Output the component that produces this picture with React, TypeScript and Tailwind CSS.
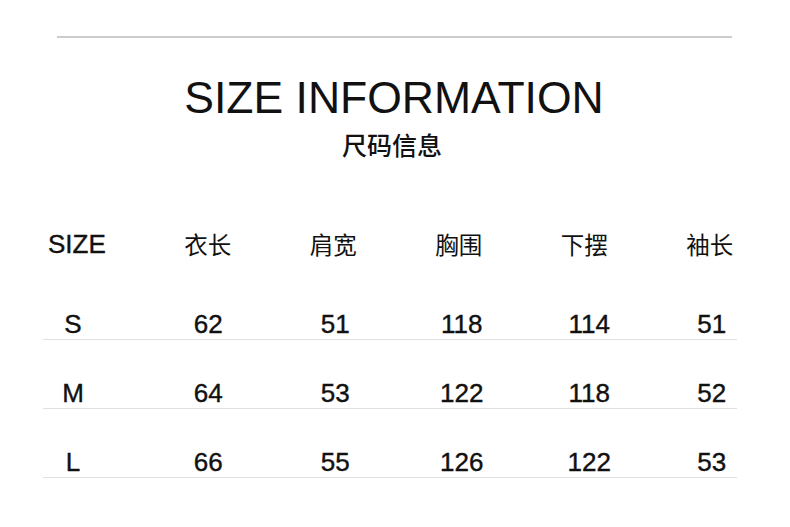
import React from 'react';

const headers = ['衣长', '肩宽', '胸围', '下摆', '袖长'];

const rows = [
  { size: 'S', values: [62, 51, 118, 114, 51] },
  { size: 'M', values: [64, 53, 122, 118, 52] },
  { size: 'L', values: [66, 55, 126, 122, 53] },
];

// small nudges so the numbers sit where the original has them
const numOffset = ['pl-[1px]', 'pl-[4px]', 'pl-[6px]', 'pl-[10px]', 'pl-[4px]'];

const latin = "font-['Liberation_Sans',Arial,sans-serif]";
const cjk = "font-['Noto_Sans_CJK_SC','Noto_Sans',sans-serif]";

const App: React.FC = () => {
  return (
    <div className={`w-[790px] h-[527px] bg-white overflow-hidden text-[#111111] ${latin}`}>
      {/* Top rule */}
      <div className="pt-[36px]">
        <div className="ml-[57px] w-[675px] h-[2px] bg-[#cccccc]" />
      </div>

      {/* Title */}
      <h1 className="mt-[38px] text-center text-[44.5px] leading-[44px] font-normal pr-[2px]">
        SIZE INFORMATION
      </h1>
      <p className={`mt-[12px] text-center text-[25px] leading-[25px] font-medium pr-[6px] ${cjk}`}>尺码信息</p>

      {/* Table */}
      <div className="mt-[72px] ml-[43px] w-[694px]">
        <div className="grid grid-cols-[102px_repeat(5,125.5px)] h-[42px] items-start">
          <div className="pl-[5px] text-[26px] leading-[30px] [-webkit-text-stroke:0.4px_#111111]">SIZE</div>
          {headers.map((h) => (
            <div key={h} className={`text-center text-[23.5px] leading-[30px] ${cjk}`}>
              {h}
            </div>
          ))}
        </div>

        {rows.map((r) => (
          <div key={r.size} className="h-[69px] border-b border-[#e0e0e0] grid grid-cols-[102px_repeat(5,125.5px)] items-end">
            <div className="w-[60px] text-center text-[26px] leading-[30px] [-webkit-text-stroke:0.4px_#111111]">{r.size}</div>
            {r.values.map((v, i) => (
              <div key={i} className={`text-center text-[26px] leading-[30px] [-webkit-text-stroke:0.4px_#111111] ${numOffset[i]}`}>
                {v}
              </div>
            ))}
          </div>
        ))}
      </div>
    </div>
  );
};

export default App;
